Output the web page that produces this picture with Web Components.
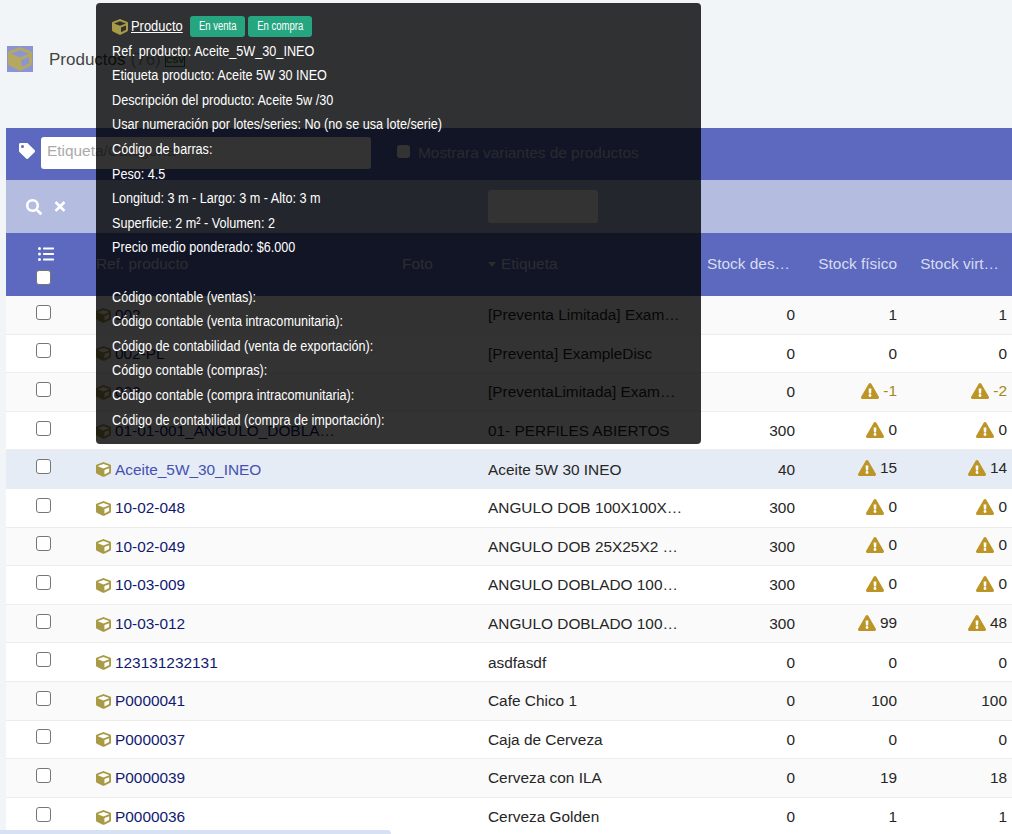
<!DOCTYPE html>
<html lang="es">
<head>
<meta charset="utf-8">
<title>Productos</title>
<style>
  html, body { margin: 0; height: 100%; overflow: hidden; }
  body { background: #f1f5f7; font-family: "Liberation Sans", Arial, sans-serif; font-size: 15.4px; color: #262626; }
</style>
</head>
<body>

<product-page></product-page>
<product-tooltip></product-tooltip>

<script>
// caja de producto, compartida por la tabla y el tooltip
const cubeIcon = (size, color, hole) => `<svg width="${size}" height="${size}" viewBox="0 0 512 512" style="flex:none">
  ${hole ? `<path fill="${hole}" d="M256 60 456 135v15L256 228 56 150v-15zM280 270 456 200V350L280 435z"/>` : ''}
  <path fill="${color}" d="M239.100 6.300l-208 78C12.400 91.300 0 109.300 0 129.300v225.100c0 18.200 10.300 34.800 26.500 42.900l208 104c13.500 6.800 29.400 6.800 42.900 0l208-104c16.300-8.100 26.500-24.800 26.500-42.900V129.300c0-20-12.400-37.900-31.100-44.900l-208-78C262 2.200 250 2.200 239.100 6.300zM256 68.400l192 72v1.100l-192 78-192-78v-1.100l192-72zm32 356V275.500l160-65v133.900l-160 80z"/>
</svg>`;

const warnIcon = `<svg width="18" height="16" viewBox="0 0 576 512" style="flex:none">
  <path fill="#bc9526" d="M569.500 440 329.600 24c-18.400-32-64.700-32-83.200 0L6.500 440c-18.400 31.900 4.600 72 41.600 72h479.800c36.900 0 60-40 41.600-72z"/>
  <path fill="#fff" d="M288 354a46 46 0 1 0 0 92 46 46 0 0 0 0-92zM244 188l7 136c.4 6.400 5.600 11 12 11h50c6.400 0 11.600-4.600 12-11l7-136c.4-6.900-5.100-12-12-12h-64c-6.900 0-12.400 5.100-12 12z"/>
</svg>`;

const ROWS = [
  ['002', '[Preventa Limitada] Exam…', '0', ['1'], ['1']],
  ['002-PL', '[Preventa] ExampleDisc', '0', ['0'], ['0']],
  ['003', '[PreventaLimitada] Exam…', '0', ['-1', 1], ['-2', 1]],
  ['01-01-001_ANGULO_DOBLA…', '01- PERFILES ABIERTOS', '300', ['0', 1], ['0', 1]],
  ['Aceite_5W_30_INEO', 'Aceite 5W 30 INEO', '40', ['15', 1], ['14', 1]],
  ['10-02-048', 'ANGULO DOB 100X100X…', '300', ['0', 1], ['0', 1]],
  ['10-02-049', 'ANGULO DOB 25X25X2 …', '300', ['0', 1], ['0', 1]],
  ['10-03-009', 'ANGULO DOBLADO 100…', '300', ['0', 1], ['0', 1]],
  ['10-03-012', 'ANGULO DOBLADO 100…', '300', ['99', 1], ['48', 1]],
  ['123131232131', 'asdfasdf', '0', ['0'], ['0']],
  ['P0000041', 'Cafe Chico 1', '0', ['100'], ['100']],
  ['P0000037', 'Caja de Cerveza', '0', ['0'], ['0']],
  ['P0000039', 'Cerveza con ILA', '0', ['19'], ['18']],
  ['P0000036', 'Cerveza Golden', '0', ['1'], ['1']],
];

class ProductRow extends HTMLElement {
  constructor() {
    super();
    this.attachShadow({ mode: 'open' });
  }

  set data(r) {
    const [ref, label, desired, phys, virt] = r;
    const stock = ([v, warn]) => {
      const neg = warn && v.startsWith('-');
      return `<span class="stock ${neg ? 'neg' : ''}">${warn ? warnIcon : ''}<span>${v}</span></span>`;
    };
    this.shadowRoot.innerHTML = `
      <style>
        :host { display: grid; grid-template-columns: 75px 392px 220px 102px 102px 110px; height: 38.6px; box-sizing: border-box;
          border-bottom: 1px solid #ededed; background: #fff; align-items: center; color: #262626; }
        :host([odd]) { background: #fafafa; }
        :host([hover]) { background: #e6ecf5; }
        .check { display: flex; justify-content: center; margin-top: -5px; }
        .box { width: 13px; height: 13px; border: 1px solid #767676; border-radius: 3px; background: #fff; }
        .ref { display: flex; align-items: center; gap: 4px; padding-left: 15px; color: #101a70; margin-top: 1px; white-space: nowrap; }
        :host([hover]) .ref { color: #4451b3; }
        .label { white-space: nowrap; margin-top: 1px; padding-left: 15px; }
        .num { text-align: right; margin-top: 1px; }
        .stock { display: inline-flex; align-items: center; gap: 4px; }
        .neg { color: #a5860f; }
      </style>
      <div class="check"><span class="box"></span></div>
      <div class="ref">${cubeIcon(15, '#a99a45', '#fff')}<span>${ref}</span></div>
      <div class="label">${label}</div>
      <div class="num">${desired}</div>
      <div class="num">${stock(phys)}</div>
      <div class="num">${stock(virt)}</div>`;
  }
}
customElements.define('product-row', ProductRow);

class ProductPage extends HTMLElement {
  constructor() {
    super();
    this.attachShadow({ mode: 'open' }).innerHTML = `
      <style>
        :host { display: block; padding-left: 6px; }
        .title { display: flex; align-items: center; height: 128px; box-sizing: border-box; padding: 10px 0 10px 1px; font-size: 17px; color: #444; }
        .logo { width: 26px; height: 26px; background: #8c95d3; display: flex; align-items: center; justify-content: center; margin-right: 16px; margin-top: -10px; }
        .name, .count { margin-top: -9px; }
        .count { color: #999; margin-left: 5px; }
        .csv { margin: -8px 0 0 4px; font-size: 9px; font-weight: bold; color: #2c7a3a; border: 1px solid #2c7a3a; width: 18px; height: 12px; line-height: 12px; text-align: center; }
        .filters { height: 52px; background: #5c69be; display: flex; align-items: center; color: #fff; }
        .tag { margin: -6px 6px 0 13px; display: flex; }
        .input { width: 330px; height: 32px; box-sizing: border-box; background: #fff; border-radius: 3px; color: #aaa; padding: 5px 6px; margin-top: -2px; }
        .variant { display: flex; align-items: center; margin: -3px 0 0 26px; color: #c8cde8; }
        .variant .box { width: 13px; height: 13px; background: #fff; border-radius: 3px; margin-right: 8px; margin-top: -3px; }
        .search { height: 53px; background: #b4bce0; display: grid; grid-template-columns: 482px 110px; align-items: center; }
        .actions { display: flex; align-items: center; gap: 12px; padding-left: 20px; }
        .field { height: 33px; background: #fff; border-radius: 3px; margin-top: -1px; }
        .head { height: 63px; background: #5c69be; display: grid; grid-template-columns: 75px 306px 86px 220px 102px 102px 110px; align-items: center; color: #d8dcf0; }
        .head > div:not(.sel) { margin-top: -2px; }
        .sel { display: flex; flex-direction: column; align-items: center; gap: 9px; padding-top: 2px; }
        .sel svg { margin-left: 4px; }
        .sel .box { width: 13px; height: 13px; background: #fff; border: 1px solid #767676; border-radius: 3px; }
        .r { text-align: right; white-space: nowrap; }
        .pad { padding-left: 15px; white-space: nowrap; }
        .caret { display: inline-block; border: 4.5px solid transparent; border-top: 5px solid currentColor; border-bottom: 0; margin-right: 5px; vertical-align: 2px; }
        .scroll { position: absolute; left: 0; top: 830px; width: 391px; height: 4px; background: #d6e1f4; border-radius: 0 4px 0 0; }
      </style>
      <div class="title">
        <span class="logo">${cubeIcon(24, '#b5a862')}</span>
        <span class="name">Productos</span><span class="count">(76)</span><span class="csv">CSV</span>
      </div>
      <div class="filters">
        <span class="tag"><svg width="16" height="16" viewBox="0 0 512 512"><path fill="#fff" d="M0 252V48C0 21 21 0 48 0h204c13 0 25 5 34 14l212 212c19 19 19 49 0 68L294 498c-19 19-49 19-68 0L14 286C5 277 0 265 0 252zm112-188a48 48 0 1 0 0 96 48 48 0 0 0 0-96z"/></svg></span>
        <span class="input">Etiqueta/Categoría</span>
        <label class="variant"><span class="box"></span>Mostrara variantes de productos</label>
      </div>
      <div class="search">
        <div class="actions">
          <svg width="16" height="16" viewBox="0 0 512 512"><path fill="#fff" d="M505 443 405 343c-4-4-10-7-17-7h-16c28-35 44-80 44-128C416 93 323 0 208 0S0 93 0 208s93 208 208 208c48 0 93-16 128-44v16c0 7 3 13 7 17l100 100c9 9 24 9 34 0l28-28c9-10 9-25 0-34zM208 336a128 128 0 1 1 0-256 128 128 0 0 1 0 256z"/></svg>
          <svg width="12" height="15" viewBox="0 0 352 512"><path fill="#fff" d="m243 256 100-100c12-12 12-32 0-44l-22-22c-12-12-32-12-44 0L176 190 76 90c-12-12-32-12-44 0L9 112c-12 12-12 32 0 44l100 100L9 356c-12 12-12 32 0 44l23 22c12 12 32 12 44 0l100-100 100 100c12 12 32 12 44 0l22-22c12-12 12-32 0-44z"/></svg>
        </div>
        <div class="field"></div>
      </div>
      <div class="head">
        <div class="sel">
          <svg width="16" height="14" viewBox="0 0 512 448"><path fill="#fff" d="M48 0a48 48 0 1 0 0 96 48 48 0 0 0 0-96zm0 176a48 48 0 1 0 0 96 48 48 0 0 0 0-96zm0 176a48 48 0 1 0 0 96 48 48 0 0 0 0-96zM496 16H176c-9 0-16 7-16 16v32c0 9 7 16 16 16h320c9 0 16-7 16-16V32c0-9-7-16-16-16zm0 176H176c-9 0-16 7-16 16v32c0 9 7 16 16 16h320c9 0 16-7 16-16v-32c0-9-7-16-16-16zm0 176H176c-9 0-16 7-16 16v32c0 9 7 16 16 16h320c9 0 16-7 16-16v-32c0-9-7-16-16-16z"/></svg>
          <span class="box"></span>
        </div>
        <div class="pad">Ref. producto</div>
        <div class="pad">Foto</div>
        <div class="pad"><span class="caret"></span>Etiqueta</div>
        <div class="r" style="padding-right:5px">Stock des…</div>
        <div class="r">Stock físico</div>
        <div class="r" style="padding-right:8px">Stock virt…</div>
      </div>
      <div id="rows"></div>
      <div class="scroll"></div>`;
    const rows = this.shadowRoot.getElementById('rows');
    ROWS.forEach((r, i) => {
      const el = document.createElement('product-row');
      if (i % 2 === 0) el.setAttribute('odd', '');
      if (i === 4) el.setAttribute('hover', '');
      el.data = r;
      rows.appendChild(el);
    });
  }
}
customElements.define('product-page', ProductPage);

class ProductTooltip extends HTMLElement {
  constructor() {
    super();
    const lines = [
      'Ref. producto: Aceite_5W_30_INEO',
      'Etiqueta producto: Aceite 5W 30 INEO',
      'Descripción del producto: Aceite 5w /30',
      'Usar numeración por lotes/series: No (no se usa lote/serie)',
      'Código de barras:',
      'Peso: 4.5',
      'Longitud: 3 m - Largo: 3 m - Alto: 3 m',
      'Superficie: 2 m² - Volumen: 2',
      'Precio medio ponderado: $6.000',
      '',
      'Código contable (ventas):',
      'Código contable (venta intracomunitaria):',
      'Código de contabilidad (venta de exportación):',
      'Código contable (compras):',
      'Código contable (compra intracomunitaria):',
      'Código de contabilidad (compra de importación):',
    ];
    this.attachShadow({ mode: 'open' }).innerHTML = `
      <style>
        :host { position: absolute; left: 96px; top: 3px; width: 605px; height: 441px; box-sizing: border-box; padding: 13px 16px;
          background: rgba(0,0,0,.8); border-radius: 4px; color: #fff; font-size: 15.4px; }
        .head { display: flex; align-items: center; height: 21px; margin-bottom: 1.6px; }
        .name { width: 51px; margin: -2px 8px 0 3px; white-space: nowrap; }
        .name span { display: inline-block; text-decoration: underline; transform: scaleX(.84); transform-origin: left; }
        .badge { background: #25a580; border-radius: 3px; font-size: 12.5px; height: 21px; line-height: 21px; margin-right: 3px; display: flex; justify-content: center; white-space: nowrap; }
        .badge span { display: block; transform: scaleX(.76); }
        .line { height: 24.6px; line-height: 24.6px; white-space: nowrap; }
        .line span { display: inline-block; transform: scaleX(.821); transform-origin: left; }
      </style>
      <div class="head">${cubeIcon(16, '#a99a45')}<span class="name"><span>Producto</span></span><span class="badge" style="width:55px"><span>En venta</span></span><span class="badge" style="width:64px"><span>En compra</span></span></div>
      ${lines.map(t => `<div class="line"><span>${t}</span></div>`).join('')}`;
  }
}
customElements.define('product-tooltip', ProductTooltip);
</script>
</body>
</html>
